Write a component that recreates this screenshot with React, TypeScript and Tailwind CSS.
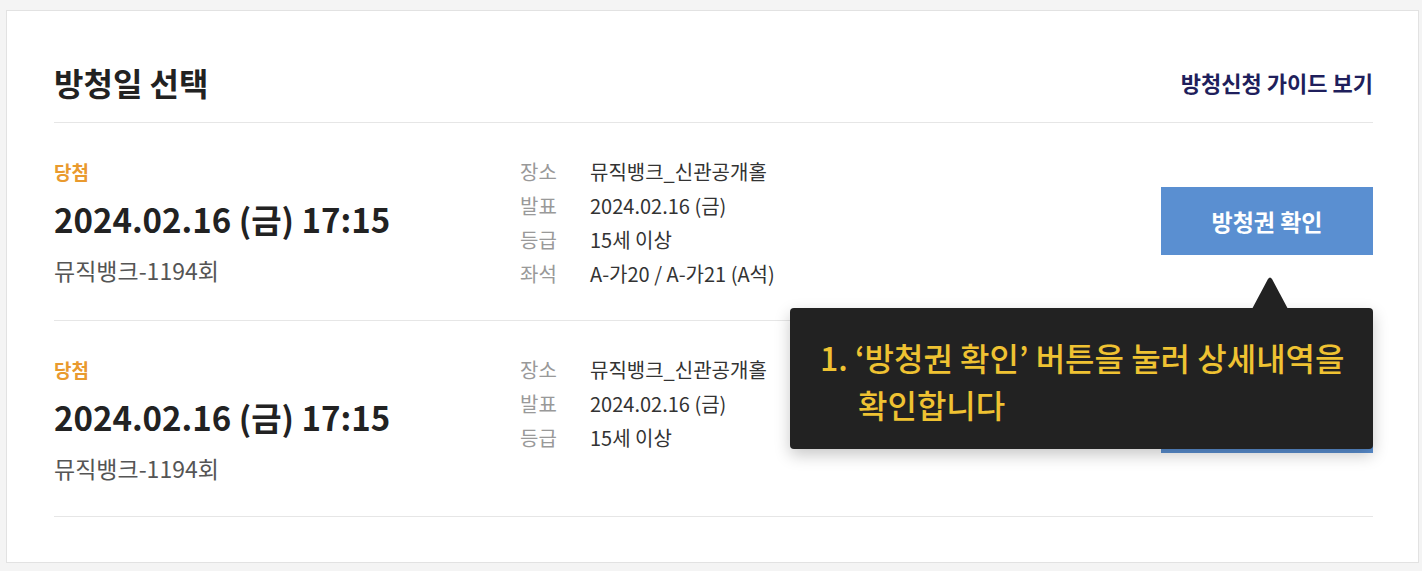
const rows = [
  {
    status: "당첨",
    date: "2024.02.16 (금) 17:15",
    title: "뮤직뱅크-1194회",
    details: [
      ["장소", "뮤직뱅크_신관공개홀"],
      ["발표", "2024.02.16 (금)"],
      ["등급", "15세 이상"],
      ["좌석", "A-가20 / A-가21 (A석)"],
    ],
  },
  {
    status: "당첨",
    date: "2024.02.16 (금) 17:15",
    title: "뮤직뱅크-1194회",
    details: [
      ["장소", "뮤직뱅크_신관공개홀"],
      ["발표", "2024.02.16 (금)"],
      ["등급", "15세 이상"],
    ],
  },
];

export default function App() {
  return (
    <div
      className="min-h-[571px] bg-[#f4f4f4] pl-[6px] pr-[3px] pt-[10px] pb-[8px]"
      style={{ fontFamily: '"Noto Sans CJK KR", "Noto Sans", sans-serif' }}
    >
      <div className="relative border border-[#e2e2e2] bg-white pl-[47px] pr-[45px] pb-[45px]">
        <div className="flex items-center justify-between border-b border-[#e6e6e6] pt-[51px] pb-[20px]">
          <h2 className="text-[32px] font-bold leading-[40px] text-[#222]">방청일 선택</h2>
          <a className="text-[22px] font-bold leading-[28px] text-[#1f1f5c]">방청신청 가이드 보기</a>
        </div>

        {rows.map((row, i) => (
          <div key={i} className="flex items-start border-b border-[#e6e6e6] pt-[37px] pb-[34px]">
            <div className="w-[466px]">
              <div className="text-[19px] font-bold leading-[24px] text-[#e99a2e]">{row.status}</div>
              <div className="mt-[15px] text-[33px] font-bold leading-[40px] text-[#222]">{row.date}</div>
              <div className="mt-[17px] text-[23px] leading-[28px] text-[#555]">{row.title}</div>
            </div>
            <div className="flex flex-1 flex-col gap-[10px]">
              {row.details.map(([label, value]) => (
                <div key={label} className="flex text-[20px] leading-[24px]">
                  <span className="w-[70px] text-[#999]">{label}</span>
                  <span className="text-[#333]">{value}</span>
                </div>
              ))}
            </div>
            <button className="mt-[27px] flex h-[68px] w-[212px] items-center justify-center bg-[#5a8fd1] text-[23px] font-bold text-white">
              방청권 확인
            </button>
          </div>
        ))}

        {/* guide tooltip */}
        <div className="absolute left-[783px] top-[297px] w-[583px] rounded-[4px] bg-[#222222] pt-[26px] pb-[21px] pl-[68px] shadow-[0_6px_16px_rgba(0,0,0,0.22)]">
          <svg className="absolute left-[462px] top-[-31px]" width="36" height="32" viewBox="0 0 36 32">
            <path d="M0 32 L16 2 Q18 -1 20 2 L36 32 Z" fill="#222222" />
          </svg>
          <p className="-indent-[38px] text-[32px] font-medium leading-[47px] text-[#efc232]">
            1. ‘방청권 확인’ 버튼을 눌러 상세내역을
            <br />
            확인합니다
          </p>
        </div>
      </div>
    </div>
  );
}
